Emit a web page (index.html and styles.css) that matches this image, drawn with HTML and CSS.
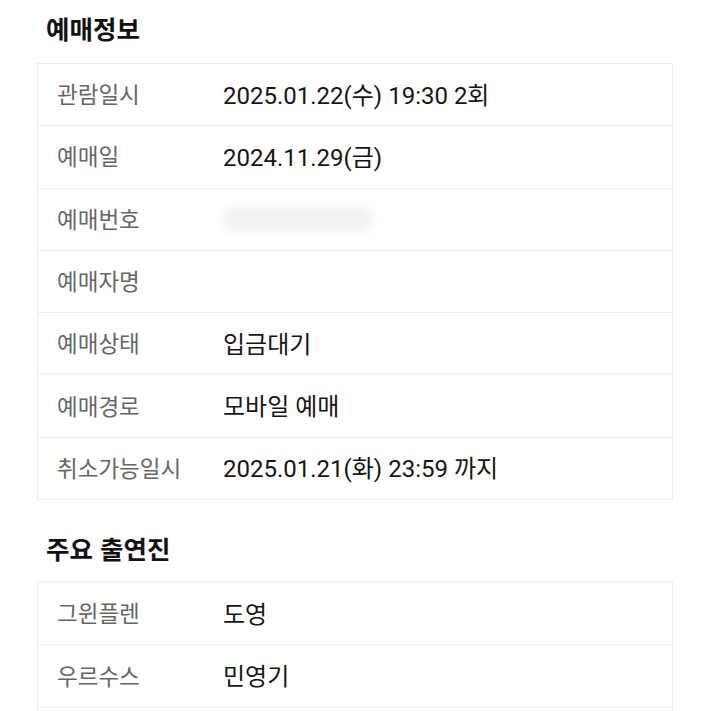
FILE: index.html
```html
<!DOCTYPE html>
<html lang="ko">
<head>
    <meta charset="UTF-8">
    <meta name="viewport" content="width=device-width, initial-scale=1.0">
    <title>예매정보</title>
    <link rel="stylesheet" href="styles.css">
</head>
<body>

    <!-- 예매정보 -->
    <h2 class="section-title">예매정보</h2>
    <div class="info-table">
        <div class="info-row">
            <span class="label">관람일시</span>
            <span class="value">2025.01.22(수) 19:30 2회</span>
        </div>
        <div class="info-row">
            <span class="label">예매일</span>
            <span class="value">2024.11.29(금)</span>
        </div>
        <div class="info-row">
            <span class="label">예매번호</span>
            <span class="value"><span class="smudge"></span></span>
        </div>
        <div class="info-row">
            <span class="label">예매자명</span>
            <span class="value"></span>
        </div>
        <div class="info-row">
            <span class="label">예매상태</span>
            <span class="value">입금대기</span>
        </div>
        <div class="info-row">
            <span class="label">예매경로</span>
            <span class="value">모바일 예매</span>
        </div>
        <div class="info-row">
            <span class="label">취소가능일시</span>
            <span class="value">2025.01.21(화) 23:59 까지</span>
        </div>
    </div>

    <!-- 주요 출연진 -->
    <h2 class="section-title cast-title">주요 출연진</h2>
    <div class="info-table">
        <div class="info-row">
            <span class="label">그윈플렌</span>
            <span class="value">도영</span>
        </div>
        <div class="info-row">
            <span class="label">우르수스</span>
            <span class="value">민영기</span>
        </div>
        <div class="info-row">
            <span class="label"></span>
            <span class="value"></span>
        </div>
    </div>

</body>
</html>
```

FILE: styles.css
```css
body {
    margin: 0;
    padding: 0;
    background: #fff;
    font-family: "Noto Sans CJK KR", "Noto Sans", sans-serif;
    color: #111;
    overflow: hidden;
}

.section-title {
    margin: 0;
    padding: 11px 0 0 46px;
    height: 63px;
    box-sizing: border-box;
    font-size: 25.5px;
    font-weight: bold;
    line-height: 34px;
    color: #111;
}

.cast-title {
    padding-top: 31px;
    height: 82px;
}

.info-table {
    margin: 0 38px 0 37px;
    border: 1px solid #ededed;
    border-bottom: none;
}

.info-row {
    display: flex;
    align-items: center;
    height: 62.3px;
    padding-bottom: 3px;
    box-sizing: border-box;
    border-bottom: 1.5px solid #eeeeee;
}

.label {
    width: 167px;
    flex-shrink: 0;
    padding-left: 19px;
    box-sizing: border-box;
    font-size: 22.5px;
    color: #666;
}

.value {
    font-family: Roboto, "Noto Sans CJK KR", sans-serif;
    font-size: 24px;
    color: #151515;
    padding-left: 18px;
}

.smudge {
    display: inline-block;
    width: 150px;
    height: 26px;
    margin-top: 8px;
    background: #f2f2f2;
    border-radius: 12px;
    filter: blur(4px);
}
```
